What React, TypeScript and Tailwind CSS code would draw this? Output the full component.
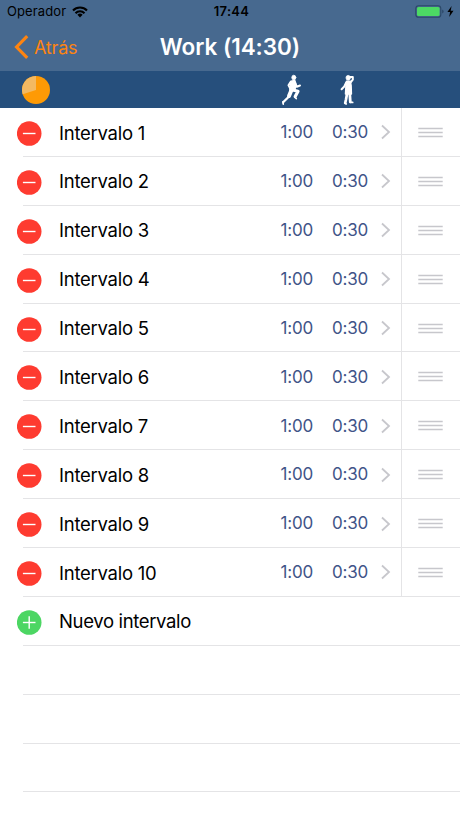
const intervals = Array.from({ length: 10 }, (_, i) => ({
  name: `Intervalo ${i + 1}`,
  work: "1:00",
  rest: "0:30",
}));

function StatusBar() {
  return (
    <div className="grid h-[23px] grid-cols-3 items-center pl-[7px] pr-[6px] text-black">
      <div className="flex items-center gap-[6px]">
        <span className="pt-px text-[13px] tracking-[0.1px]">Operador</span>
        <svg width="16" height="12" viewBox="0 0 16 12" fill="none" stroke="black" strokeWidth="2.1">
          <path d="M1 4.400a10 10 0 0 1 14 0" />
          <path d="M3.500 7.200a6.300 6.300 0 0 1 9 0" />
          <path d="M8 11.400 5.400 8.800a3.700 3.700 0 0 1 5.200 0z" fill="black" stroke="none" />
        </svg>
      </div>
      <span className="pl-[2px] pt-px text-center text-[13px] font-semibold tracking-[0.3px]">17:44</span>
      <div className="flex items-center justify-end">
        <svg width="39" height="13" viewBox="0 0 39 13">
          <rect x="0.8" y="0.8" width="25" height="11.4" rx="2.8" fill="none" stroke="#2c4868" strokeWidth="1.1" />
          <rect x="2" y="2" width="22.6" height="9" rx="1.5" fill="#4cd964" />
          <path d="M27.200 4.500q1.400.4 1.400 2t-1.400 2z" fill="#2c4868" />
          <path d="M36.600 1 32.400 7h2.700l-.9 5 4.300-6.200h-2.800z" fill="black" />
        </svg>
      </div>
    </div>
  );
}

function NavBar() {
  return (
    <div className="grid h-12 grid-cols-[110px_1fr_110px] items-center">
      <button type="button" className="flex items-center gap-[5px] pl-[14px] text-[#fd8411]">
        <svg width="15" height="24" viewBox="0 0 15 24" fill="none" stroke="currentColor" strokeWidth="3.2">
          <path d="M13.200 1.200 2.600 12l10.600 10.800" />
        </svg>
        <span className="text-[18px] tracking-[-0.2px]">Atrás</span>
      </button>
      <h1 className="text-center text-[22.5px] font-semibold tracking-[-0.05px] text-white">Work (14:30)</h1>
    </div>
  );
}

function Runner() {
  return (
    <svg width="28" height="37" viewBox="0 0 28 37" fill="white" stroke="white" strokeLinecap="round" strokeLinejoin="round">
      <ellipse cx="15.800" cy="6.600" rx="2" ry="2.400" strokeWidth="0.8" />
      <path d="M12.800 10.200 16.800 9.400 18 13 16.800 19.500 11.800 19.500 12.300 14z" strokeWidth="1.400" />
      <path d="M12.500 11 10.500 14.300 12 17M17.500 13 18.800 15.800 22 14.500" fill="none" strokeWidth="2" />
      <path d="M15 19 20 20.200 17.200 25.500" fill="none" strokeWidth="3.200" />
      <path d="M16.800 26 18.200 27.500M5 31 5.200 33" fill="none" strokeWidth="1.800" />
      <path d="M13.300 19.500 11 25" fill="none" strokeWidth="4" />
      <path d="M11 25.500 5.400 31" fill="none" strokeWidth="2.300" />
    </svg>
  );
}

function Walker() {
  return (
    <svg width="28" height="37" viewBox="0 0 28 37" fill="white" stroke="white" strokeLinecap="round" strokeLinejoin="round">
      <ellipse cx="13.200" cy="6.800" rx="2.200" ry="2.400" strokeWidth="0.8" />
      <path d="M15.200 6h2.600v2.700L15.500 11.500" fill="none" strokeWidth="2" />
      <path d="M11.500 10.300h3.800l.8 4.200.3 8.500h-5.900l.4-7z" strokeWidth="1.500" />
      <path d="M11.200 11.500 9.300 15.500 6.600 18.200" fill="none" strokeWidth="2" />
      <path d="M12 23 11 28.500 10.200 32" fill="none" strokeWidth="2.700" />
      <path d="M14.800 23 15.300 30.800" fill="none" strokeWidth="2.800" />
      <path d="M10.300 32.400 11.300 32.900M15.500 31.400h2.200" fill="none" strokeWidth="1.700" />
    </svg>
  );
}

function ColumnHeader() {
  return (
    <div className="flex h-[37px] items-center bg-[#264f7c]">
      <svg className="ml-[22px]" width="28" height="28" viewBox="0 0 28 28">
        <circle cx="14" cy="14" r="14" fill="#fe9a05" />
        <path d="M14 14V0A14 14 0 0 0 .7 18.300z" fill="#f3b962" />
      </svg>
      <div className="ml-auto mr-[97px] flex gap-[29px]">
        <Runner />
        <Walker />
      </div>
    </div>
  );
}

function RoundIcon({ add = false }: { add?: boolean }) {
  return (
    <svg className="mt-[2px] shrink-0" width="25" height="25" viewBox="0 0 25 25" stroke="white" strokeWidth="1.4">
      <circle cx="12.200" cy="12.500" r="12.300" fill={add ? "#4cd663" : "#fe3b30"} stroke="none" />
      <path d="M5.900 12.500h12.600" />
      {add && <path d="M12.200 6.200v12.600" />}
    </svg>
  );
}

function IntervalRow({ name, work, rest }: { name: string; work: string; rest: string }) {
  return (
    <li className="flex h-[48.9px] items-center pl-[17px]">
      <RoundIcon />
      <div className="ml-[17px] flex h-full flex-1 items-center">
        <span className="flex-1 pt-[2px] text-[18.5px] tracking-[-0.25px] text-black">{name}</span>
        <span className="w-[56px] pt-px text-right text-[17px] tracking-[-0.2px] text-[#3f5488]">{work}</span>
        <span className="w-[55px] pt-px text-right text-[17px] tracking-[-0.2px] text-[#3f5488]">{rest}</span>
        <svg className="ml-[12px] mr-[10px]" width="11" height="16" viewBox="0 0 11 16" fill="none" stroke="#c7c7cc" strokeWidth="1.800">
          <path d="m2 1.500 7 6.500-7 6.500" />
        </svg>
      </div>
      <div className="flex h-full w-[59px] items-center justify-center border-l border-[#e4e4e6] pr-px">
        <svg width="25" height="11" viewBox="0 0 25 11" stroke="#c7c7cc" strokeWidth="1.300">
          <path d="M.3 1.500h24.400M.3 5.500h24.400M.3 9.500h24.400" />
        </svg>
      </div>
    </li>
  );
}

function Separator() {
  return <li className="-mt-px ml-[23px] h-px bg-[#e4e4e6]" />;
}

export default function App() {
  return (
    <div className="h-[818px] w-[460px] overflow-hidden bg-white font-['Inter',sans-serif]">
      <header>
        <div className="bg-[#47698f]">
          <StatusBar />
          <NavBar />
        </div>
        <ColumnHeader />
      </header>
      <ul>
        {intervals.map((interval) => (
          <div key={interval.name} className="contents">
            <IntervalRow {...interval} />
            <Separator />
          </div>
        ))}
        <li className="flex h-[48.9px] items-center pl-[17px]">
          <RoundIcon add />
          <span className="ml-[17px] pt-[2px] text-[18.5px] tracking-[-0.35px]">Nuevo intervalo</span>
        </li>
        <Separator />
        {[1, 2, 3].map((n) => (
          <div key={n} className="contents">
            <li className="h-[48.9px]" />
            <Separator />
          </div>
        ))}
      </ul>
    </div>
  );
}
